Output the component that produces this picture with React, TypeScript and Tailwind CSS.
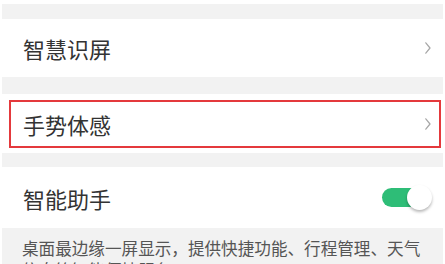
import React from 'react'

const font = { fontFamily: '"Noto Sans CJK SC", "Noto Sans", sans-serif' }

function Chevron() {
  return (
    <svg width="6" height="12" viewBox="0 0 6 12" fill="none">
      <path d="M0.8 0.8 L5 6 L0.8 11.2" stroke="#a6a6a6" strokeWidth="1.2" strokeLinecap="round" strokeLinejoin="round" />
    </svg>
  )
}

function Toggle() {
  return (
    <div className="relative w-[50px] h-[25px]">
      <div className="absolute left-0 top-[3px] w-[44px] h-[19px] rounded-full bg-[#2ebd77]" />
      <div className="absolute right-0 top-0 w-[25px] h-[25px] rounded-full bg-white shadow-[0_2px_3px_rgba(0,0,0,0.28)]" />
    </div>
  )
}

export default function App() {
  return (
    <div className="w-[445px] h-[264px] overflow-hidden bg-white pt-[4px] text-[#333]" style={font}>
      <div className="h-[15px] mx-[2px] bg-[#f2f2f2]" />

      <div className="h-[58px] flex items-center justify-between pl-[23px] pr-[14px]">
        <span className="text-[22px] leading-none">智慧识屏</span>
        <Chevron />
      </div>

      <div className="h-[17px] mx-[2px] bg-[#f2f2f2]" />

      <div className="h-[59px] pt-[6px] pl-[9px] pr-[4px]">
        <div className="h-[48px] border-2 border-[#e4393c] flex items-center justify-between pl-[12px] pr-[8px]">
          <span className="text-[22px] leading-none">手势体感</span>
          <Chevron />
        </div>
      </div>

      <div className="h-[14px] mx-[2px] bg-[#f2f2f2]" />

      <div className="h-[61px] flex items-center justify-between pl-[23px] pr-[13px]">
        <span className="text-[22px] leading-none">智能助手</span>
        <Toggle />
      </div>

      <div className="mx-[2px] bg-[#f2f2f2] pt-[9px] pl-[20px] pr-[14px] pb-[10px] text-[16.6px] leading-[22px] text-[#555]">
        桌面最边缘一屏显示，提供快捷功能、行程管理、天气信息等智能便捷服务。
      </div>
    </div>
  )
}
